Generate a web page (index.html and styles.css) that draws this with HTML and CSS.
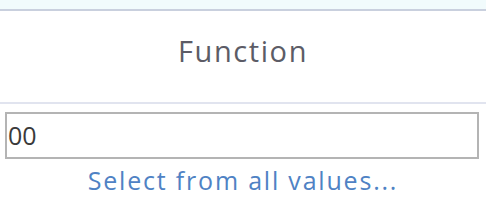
FILE: index.html
```html
<!DOCTYPE html>
<html>
<head>
<meta charset="utf-8">
<link rel="stylesheet" href="styles.css">
</head>
<body>
<div class="panel">
  <div class="topstrip"></div>
  <div class="header">Function</div>
  <div class="body">
    <div class="field">00</div>
    <a class="link" href="#">Select from all values...</a>
  </div>
</div>
</body>
</html>
```
FILE: styles.css
```css
html, body {
  margin: 0;
  padding: 0;
  background: #ffffff;
}
.panel {
  width: 486px;
  height: 208px;
  display: flex;
  flex-direction: column;
  font-family: "Open Sans", "DejaVu Sans", sans-serif;
}
.topstrip {
  height: 9px;
  background: #f1fbfc;
  border-bottom: 2px solid #c9d0de;
}
.header {
  height: 93px;
  display: flex;
  align-items: center;
  justify-content: center;
  font-size: 29px;
  letter-spacing: 1.6px;
  color: #5c5c66;
  padding-bottom: 12px;
  box-sizing: border-box;
  border-bottom: 2px solid #e1e4ef;
}
.body {
  display: flex;
  flex-direction: column;
  align-items: center;
  padding-top: 8px;
}
.field {
  align-self: flex-start;
  margin-left: 5px;
  width: 474px;
  height: 47px;
  box-sizing: border-box;
  border: 2px solid #b4b4b4;
  font-size: 25px;
  line-height: 42px;
  padding-left: 1px;
  color: #3a3a3a;
}
.link {
  margin-top: 5px;
  font-size: 25px;
  letter-spacing: 1.8px;
  color: #4f82c4;
  text-decoration: none;
  line-height: 32px;
}
```
